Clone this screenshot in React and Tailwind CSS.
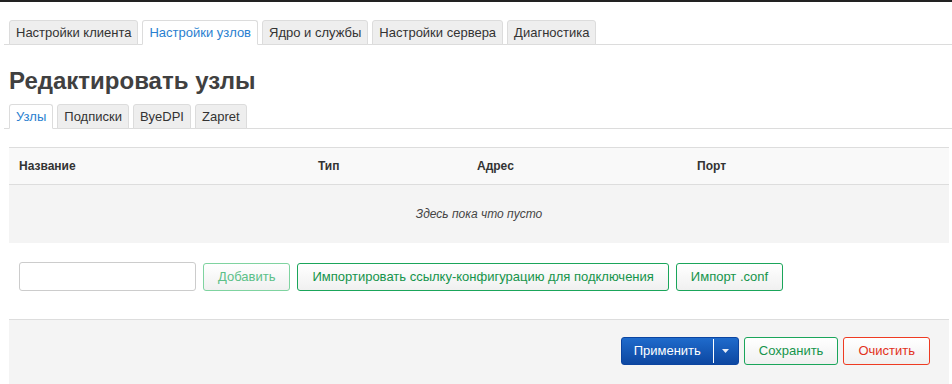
import React from "react";

const font = { fontFamily: '"Liberation Sans", Arial, sans-serif' };

function Tab({ label, active }) {
  return (
    <div
      className={
        "h-[25px] px-[6px] flex items-center text-[13px] rounded-t-[3px] border border-[#dcdcdc] -mb-px " +
        (active
          ? "bg-white text-[#2a7fd0] border-b-white"
          : "bg-[#eeeeee] text-[#333]")
      }
    >
      {label}
    </div>
  );
}

function GreenBtn({ children, light }) {
  return (
    <button
      className={
        "h-[28px] px-[14px] rounded-[3px] border text-[13px] bg-gradient-to-b from-white to-[#f0f0f0] " +
        (light
          ? "border-[#7fd3a0] text-[#5cc088]"
          : "border-[#1aa55a] text-[#15944b]")
      }
    >
      {children}
    </button>
  );
}

export default function App() {
  return (
    <div className="w-[952px] h-[384px] bg-white overflow-hidden" style={font}>
      <div className="h-[2px] bg-[#222]" />
      <div className="pl-[4px] pt-[18px]">
        <div className="flex gap-[4px] pl-[5px] border-b border-[#dcdcdc]">
          <Tab label="Настройки клиента" />
          <Tab label="Настройки узлов" active />
          <Tab label="Ядро и службы" />
          <Tab label="Настройки сервера" />
          <Tab label="Диагностика" />
        </div>
      </div>
      <div className="pl-[9px] pr-[3px]">
        <h2 className="mt-[22px] text-[24px] leading-[28px] font-bold text-[#404040]">
          Редактировать узлы
        </h2>
      </div>
      <div className="pl-[4px] mt-[9px]">
        <div className="flex gap-[4px] pl-[5px] border-b border-[#dcdcdc]">
          <Tab label="Узлы" active />
          <Tab label="Подписки" />
          <Tab label="ByeDPI" />
          <Tab label="Zapret" />
        </div>
      </div>
      <div className="pl-[9px] pr-[3px]">
        <div className="mt-[18px] border-t border-[#dddddd]">
          <div className="grid grid-cols-[299px_159px_220px_1fr] h-[37px] items-center bg-[#f9f9f9] border-b border-[#dddddd] text-[12px] font-bold text-[#333]">
            <div className="pl-[10px]">Название</div>
            <div className="pl-[10px]">Тип</div>
            <div className="pl-[10px]">Адрес</div>
            <div className="pl-[10px]">Порт</div>
          </div>
          <div className="h-[58px] bg-[#f4f4f4] flex items-center justify-center text-[12px] italic text-[#444]">
            Здесь пока что пусто
          </div>
        </div>
        <div className="flex items-center gap-[7px] pl-[10px] mt-[19px]">
          <input className="w-[177px] h-[29px] rounded-[3px] border border-[#cccccc] bg-white" />
          <GreenBtn light>Добавить</GreenBtn>
          <GreenBtn>Импортировать ссылку-конфигурацию для подключения</GreenBtn>
          <GreenBtn>Импорт .conf</GreenBtn>
        </div>
        <div className="mt-[28px] h-[70px] bg-[#f4f4f4] border-t border-[#dddddd] flex justify-end items-start pt-[17px] pr-[19px] gap-[5px]">
          <div className="flex h-[28px] rounded-[3px] border border-[#0b44a0] bg-gradient-to-b from-[#1f6bcc] to-[#0d47a1] text-white text-[13px]">
            <div className="px-[12px] flex items-center">Применить</div>
            <div className="w-px bg-white my-[1px]" />
            <div className="w-[24px] flex items-center justify-center">
              <svg width="7" height="4" viewBox="0 0 7 4">
                <path d="M0 0h7L3.5 4z" fill="#e8eef8" />
              </svg>
            </div>
          </div>
          <button className="h-[28px] px-[14px] rounded-[3px] border border-[#1aa55a] text-[#15944b] text-[13px] bg-gradient-to-b from-white to-[#f0f0f0]">
            Сохранить
          </button>
          <button className="h-[28px] px-[14px] rounded-[3px] border border-[#ee3b22] text-[#e2321c] text-[13px] bg-gradient-to-b from-white to-[#f0f0f0]">
            Очистить
          </button>
        </div>
      </div>
    </div>
  );
}
